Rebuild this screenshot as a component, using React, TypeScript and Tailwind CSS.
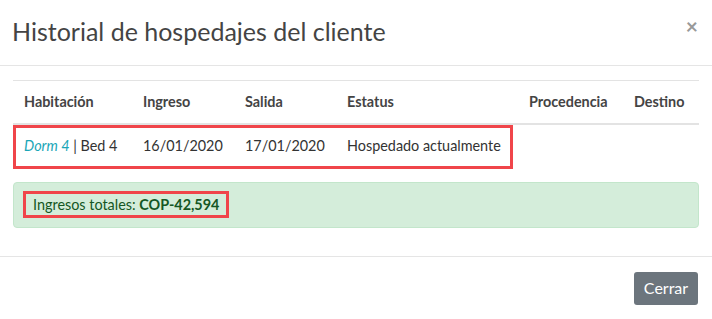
const cols = [
  { label: "Habitación", w: "w-[119px]" },
  { label: "Ingreso", w: "w-[102px]" },
  { label: "Salida", w: "w-[102px]" },
  { label: "Estatus", w: "w-[182px]" },
  { label: "Procedencia", w: "w-[105px]" },
  { label: "Destino", w: "" },
];

export default function App() {
  return (
    <div className="w-[712px] h-[319px] bg-white text-[#333] font-['Lato',sans-serif] overflow-hidden">
      {/* header */}
      <div className="flex items-start justify-between h-[66px] border-b border-[#e5e5e5] pl-3 pr-[14px] pt-[14px]">
        <h4 className="text-[25px] leading-[35px] text-[#444]">
          Historial de hospedajes del cliente
        </h4>
        <button className="text-[21px] leading-[21px] font-bold text-[#999] mt-[1px]">
          ×
        </button>
      </div>

      {/* body */}
      <div className="px-[13px] pt-[14px] pb-[28px]">
        <table className="w-full text-[14.4px] border-collapse">
          <thead>
            <tr className="border-t border-[#e3e3e3] border-b-2 border-b-[#e3e3e3]">
              {cols.map((c) => (
                <th
                  key={c.label}
                  className={`${c.w} text-left font-bold text-[#444] px-[11px] h-[43px] leading-5`}
                >
                  {c.label}
                </th>
              ))}
            </tr>
          </thead>
          <tbody>
            <tr>
              <td className="px-[11px] h-[44px] leading-5 relative">
                <span className="absolute left-0 top-0 w-[500px] h-[44px] border-[3px] border-[#f0454a] pointer-events-none"></span>
                <a className="italic text-[#1aa6b7]">Dorm 4</a>
                <span className="text-[#333]"> | Bed 4</span>
              </td>
              <td className="px-[11px]">16/01/2020</td>
              <td className="px-[11px]">17/01/2020</td>
              <td className="px-[11px]">Hospedado actualmente</td>
              <td className="px-[11px]"></td>
              <td className="px-[11px]"></td>
            </tr>
          </tbody>
        </table>

        <div className="mt-[14px] h-[46px] bg-[#d4edda] border border-[#c3e6cb] rounded-[4px] flex items-center pl-[9px] text-[14.4px] text-[#155724]">
          <div className="border-[3px] border-[#f0454a] h-[27px] flex items-center px-[7px]">
            Ingresos totales:&nbsp;<b>COP-42,594</b>
          </div>
        </div>
      </div>

      {/* footer */}
      <div className="border-t border-[#e5e5e5] flex justify-end px-[14px] pt-[15px]">
        <button className="bg-[#6c757d] text-white text-[16px] leading-5 rounded-[3px] w-[64px] h-[33px]">
          Cerrar
        </button>
      </div>
    </div>
  );
}
